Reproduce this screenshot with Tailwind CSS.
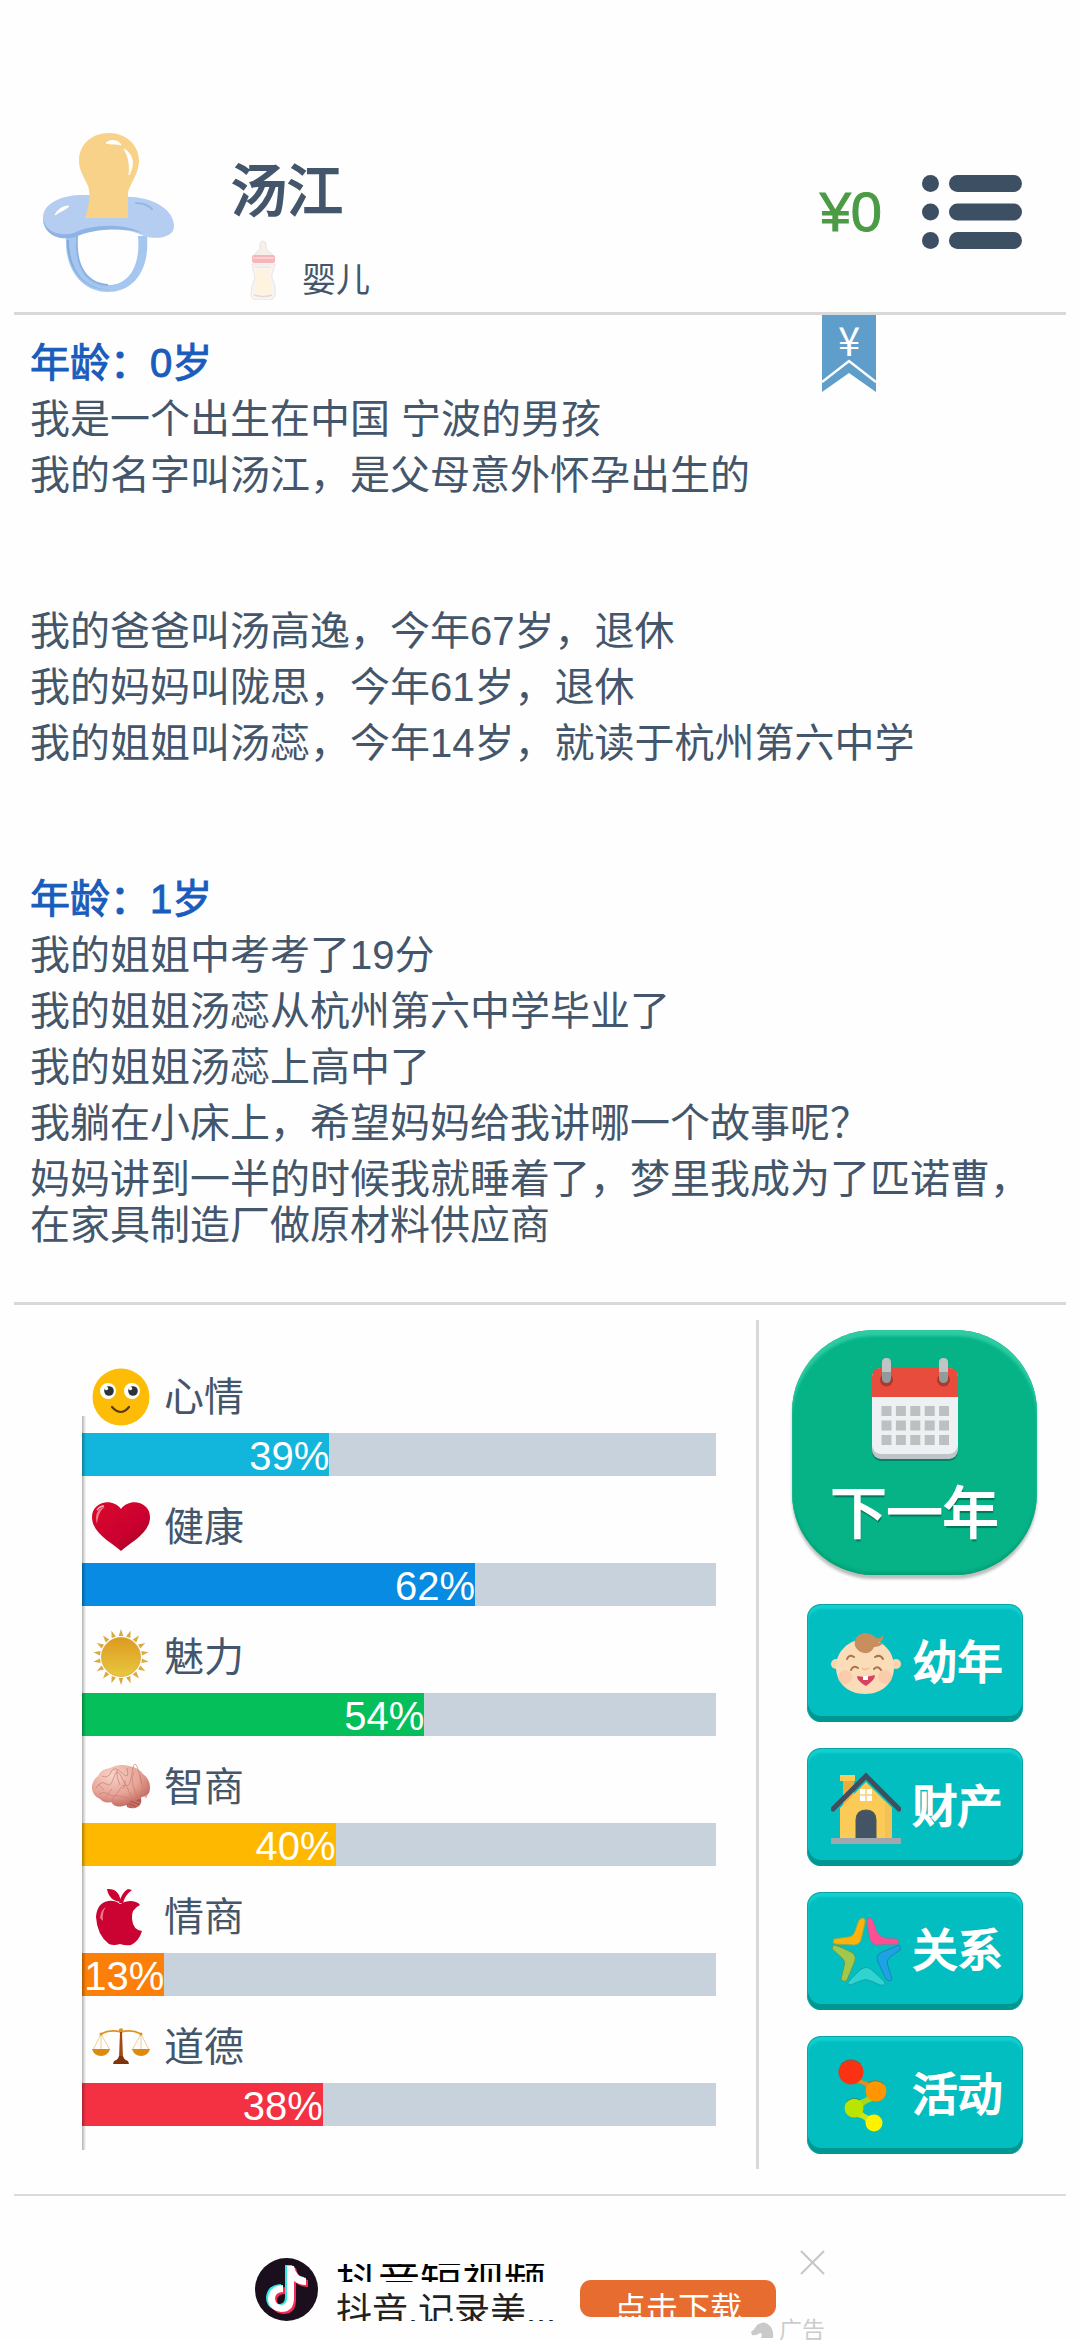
<!DOCTYPE html>
<html lang="zh-CN">
<head>
    <meta charset="UTF-8">
    <meta name="viewport" content="width=device-width, initial-scale=1.0">
    <title>人生模拟</title>
    <script src="https://cdn.jsdelivr.net/npm/@tailwindcss/browser@4"></script>
</head>
<body class="bg-[#fefefe] text-[#43566b] font-['Liberation_Sans','Noto_Sans_CJK_SC',sans-serif]">

<div class="flex flex-col min-h-screen px-3.5 overflow-hidden">

    <!-- Header -->
    <header class="flex items-start h-[312px] pt-[132px] pl-7 pr-11">
        <svg class="w-[136px] h-40 shrink-0" viewBox="0 0 136 160" aria-hidden="true">
            <path d="M24 104C22 140 42 160 66 160S108 140 105 104L96 104C99 138 84 153 67 153S32 136 34 104Z" fill="#a5c6ee"/>
            <path d="M27 108C27 138 42 158 68 157C44 160 24 138 25 108Z" fill="#82aadb"/>
            <path d="M35 104C33 134 44 152 66 153" fill="none" stroke="#8db3e3" stroke-width="2"/>
            <path d="M1 86C1 70 22 62 45 63L90 65C112 66 132 78 132 94C132 106 114 108 102 104C84 94 48 96 34 104C14 110 1 100 1 86Z" fill="#b4cdf0"/>
            <path d="M1 86C3 100 18 105 32 101C46 93 82 90 100 101C82 95 48 97 34 105C14 110 1 100 1 86Z" fill="#8fb3e4"/>
            <path d="M13 83C16 77 21 74 27 74C25 77 19 79 13 83Z" fill="#fff" stroke="#fff" stroke-width="1"/>
            <path d="M94 71Q104 71 110 77" fill="none" stroke="#93b6e8" stroke-width="2" stroke-linecap="round"/>
            <path d="M43 86C47 74 49 62 46 54C42 45 37 38 37 29C37 12 50 1 67 1S97 13 97 29C97 41 89 50 86 60L86 86Z" fill="#f7d288"/>
            <path d="M64 11C68 7 77 8 79 13C74 11 69 13 64 11Z" fill="#fff" stroke="#fff"/>
            <path d="M82 17C91 22 93 32 87 43C88 33 87 25 82 17Z" fill="#fff" stroke="#fff"/>
        </svg>

        <div class="flex flex-col pl-[53px] pt-7 grow">
            <h1 class="text-[56px] leading-[64px] [-webkit-text-stroke:2px]">汤江</h1>
            <div class="flex items-end gap-6 pl-[18px] pt-4">
                <svg class="w-[29px] h-[60px]" viewBox="0 0 29 60" aria-hidden="true">
                    <path d="M11 3Q14-1 17 3V9L20 12Q24 14 24 16H5Q5 14 8 12L11 9Z" fill="#f6f0ea" stroke="#e0dad4" stroke-width=".7"/>
                    <path d="M3 24H26Q25 30 23 34Q22 38 25 43Q27 49 26 55Q25 60 20 60H8Q3 60 2 55Q2 48 4 43Q7 38 5 33Q3 28 3 24Z" fill="#f8f4f1" stroke="#e2dbd5" stroke-width=".7"/>
                    <path d="M7 30H21V36Q22 41 23 46V53H6V46Q8 40 7 36Z" fill="#fdf3df"/>
                    <path d="M5 55Q14 58 23 55" fill="none" stroke="#ecd7cf" stroke-width="1.5"/>
                    <path d="M5 27H22" stroke="#eadeda"/>
                    <rect x="3" y="15" width="23" height="8" rx="2" fill="#f4b6bb"/>
                    <path d="M4 18H25" stroke="#f9cfd1" stroke-width="2"/>
                </svg>
                <span class="text-[34px] leading-10">婴儿</span>
            </div>
        </div>

        <div class="flex items-center gap-10 pt-[43px]">
            <span class="text-[56px] leading-[74px] text-[#4b9b46] [-webkit-text-stroke:1px]">¥0</span>
            <button type="button" aria-label="菜单">
                <svg class="w-[100px] h-[74px]" viewBox="0 0 100 74" fill="#3d4f63">
                    <circle cx="8.5" cy="8.5" r="8.5"/><rect x="27" width="73" height="17" rx="8.5"/>
                    <circle cx="8.5" cy="37" r="8.5"/><rect x="27" y="28.5" width="73" height="17" rx="8.5"/>
                    <circle cx="8.5" cy="65.5" r="8.5"/><rect x="27" y="57" width="73" height="17" rx="8.5"/>
                </svg>
            </button>
        </div>
    </header>

    <!-- Life log -->
    <main class="relative border-y-3 border-[#d9d9d9] h-[993px] pt-[25px] px-4 text-[40px] leading-[46px]">
        <button type="button" class="absolute top-0 right-[190px] w-[54px] h-[77px] pb-[30px] text-white" aria-label="金钱">
            <svg class="absolute inset-0 w-full h-full" viewBox="0 0 54 77" aria-hidden="true">
                <path d="M0 0H54V77L27 58L0 77Z" fill="#5f9ecb"/>
                <path d="M0 67L27 46L54 67" fill="none" stroke="#fff" stroke-width="2.5"/>
            </svg>
            <span class="relative block text-[40px] leading-[46px] font-['Noto_Sans_CJK_SC',sans-serif]">¥</span>
        </button>

        <section class="flex flex-col gap-2.5">
            <h2 class="text-[#1a5cbc] [-webkit-text-stroke:1px]">年龄：0岁</h2>
            <p>我是一个出生在中国 宁波的男孩</p>
            <p>我的名字叫汤江，是父母意外怀孕出生的</p>
        </section>
        <section class="flex flex-col gap-2.5 pt-[110px]">
            <p>我的爸爸叫汤高逸，今年67岁，退休</p>
            <p>我的妈妈叫陇思，今年61岁，退休</p>
            <p>我的姐姐叫汤蕊，今年14岁，就读于杭州第六中学</p>
        </section>
        <section class="flex flex-col gap-2.5 pt-[110px]">
            <h2 class="text-[#1a5cbc] [-webkit-text-stroke:1px]">年龄：1岁</h2>
            <p>我的姐姐中考考了19分</p>
            <p>我的姐姐汤蕊从杭州第六中学毕业了</p>
            <p>我的姐姐汤蕊上高中了</p>
            <p>我躺在小床上，希望妈妈给我讲哪一个故事呢？</p>
            <p>妈妈讲到一半的时候我就睡着了，梦里我成为了匹诺曹，在家具制造厂做原材料供应商</p>
        </section>
    </main>

    <div class="flex h-[889px] pt-[15px]">

        <!-- Stats -->
        <section class="grow h-[849px] border-r-3 border-[#d9d9d9] pl-[68px] pr-10 pt-[26px]">
            <div class="relative text-[40px]">
                <div>
                    <div class="flex items-center gap-3.5 h-[87px] pl-2.5 pt-3.5">
                        <svg class="w-[58px] h-[58px]" viewBox="0 0 58 58" aria-hidden="true">
                            <circle cx="29" cy="29" r="28.5" fill="#fdbc05"/>
                            <circle cx="16" cy="23" r="8" fill="#fff"/><circle cx="40" cy="23" r="8" fill="#fff"/>
                            <circle cx="17" cy="23" r="4.8" fill="#2c3338"/><circle cx="41" cy="23" r="4.8" fill="#2c3338"/>
                            <circle cx="14.5" cy="20.5" r="1.7" fill="#fff"/><circle cx="38.5" cy="20.5" r="1.7" fill="#fff"/>
                            <path d="M20 39Q29 49 37 39" fill="none" stroke="#5b3b08" stroke-width="2.2" stroke-linecap="round"/>
                        </svg>
                        <span class="leading-[46px]">心情</span>
                    </div>
                    <div class="h-[43px] bg-[#c8d2dc]"><div class="h-full bg-[#12b5dc] text-white text-right leading-[46px]" style="width:39%">39%</div></div>
                </div>
                <div>
                    <div class="flex items-center gap-3.5 h-[87px] pl-2.5 pt-3.5">
                        <svg class="w-[58px] h-[58px]" viewBox="0 0 58 58" aria-hidden="true">
                            <defs><linearGradient id="heart" x1="0" y1="0" x2="1" y2="1"><stop offset="0" stop-color="#d80a2c"/><stop offset=".6" stop-color="#cb0030"/><stop offset="1" stop-color="#93061c"/></linearGradient></defs>
                            <path d="M29 53C21 45 0 36 0 19C0 4 20-1 29 11C38-1 58 4 58 19C58 36 37 45 29 53Z" fill="url(#heart)"/>
                            <path d="M5 26C2 17 6 9 13 9C8 12 6 18 5 26Z" fill="#ff8fa0" opacity=".8"/>
                            <path d="M5 12Q8 8 12 8" stroke="#fff" stroke-width="1.5" fill="none" opacity=".7"/>
                        </svg>
                        <span class="leading-[46px]">健康</span>
                    </div>
                    <div class="h-[43px] bg-[#c8d2dc]"><div class="h-full bg-[#088be2] text-white text-right leading-[46px]" style="width:62%">62%</div></div>
                </div>
                <div>
                    <div class="flex items-center gap-3.5 h-[87px] pl-2.5 pt-3.5">
                        <svg class="w-[58px] h-[58px]" viewBox="0 0 58 58" aria-hidden="true">
                            <defs>
                                <linearGradient id="sun" x1="0" y1="0" x2="0" y2="1"><stop offset="0" stop-color="#dc9a20"/><stop offset="1" stop-color="#e9c73e"/></linearGradient>
                                <path id="ray" d="M26.7 8L29 1L31.3 8Z" fill="#d9aa3e"/>
                            </defs>
                            <use href="#ray"/><use href="#ray" transform="rotate(20 29 29)"/><use href="#ray" transform="rotate(40 29 29)"/><use href="#ray" transform="rotate(60 29 29)"/><use href="#ray" transform="rotate(80 29 29)"/><use href="#ray" transform="rotate(100 29 29)"/><use href="#ray" transform="rotate(120 29 29)"/><use href="#ray" transform="rotate(140 29 29)"/><use href="#ray" transform="rotate(160 29 29)"/><use href="#ray" transform="rotate(180 29 29)"/><use href="#ray" transform="rotate(200 29 29)"/><use href="#ray" transform="rotate(220 29 29)"/><use href="#ray" transform="rotate(240 29 29)"/><use href="#ray" transform="rotate(260 29 29)"/><use href="#ray" transform="rotate(280 29 29)"/><use href="#ray" transform="rotate(300 29 29)"/><use href="#ray" transform="rotate(320 29 29)"/><use href="#ray" transform="rotate(340 29 29)"/>
                            <circle cx="29" cy="29" r="19.5" fill="url(#sun)" stroke="#d9a63a" stroke-width=".8"/>
                        </svg>
                        <span class="leading-[46px]">魅力</span>
                    </div>
                    <div class="h-[43px] bg-[#c8d2dc]"><div class="h-full bg-[#05bf5b] text-white text-right leading-[46px]" style="width:54%">54%</div></div>
                </div>
                <div>
                    <div class="flex items-center gap-3.5 h-[87px] pl-2.5 pt-3.5">
                        <svg class="w-[58px] h-[58px]" viewBox="0 0 58 58" aria-hidden="true">
                            <defs><radialGradient id="brain" cx=".35" cy=".25" r=".8"><stop offset="0" stop-color="#f8d3c8"/><stop offset=".6" stop-color="#e6a396"/><stop offset="1" stop-color="#c0645a"/></radialGradient></defs>
                            <path d="M34 42L48 38Q51 44 47 48Q42 52 35 49Z" fill="#b55a50"/>
                            <path d="M37 44L46 48M36 47L43 50M39 42L48 45" stroke="#d98b80" stroke-width=".8"/>
                            <path d="M0 31Q-1 23 6 18Q9 11 18 10Q27 5 37 8Q46 9 51 16Q58 21 58 30Q58 38 50 39Q46 43 39 42Q38 47 31 48Q23 50 19 44Q13 46 8 41Q1 38 0 31Z" fill="url(#brain)"/>
                            <path d="M4 30Q9 22 14 26T22 19T31 22T40 15T49 23T55 31M10 18Q16 21 19 14T30 15T35 10M7 36Q13 33 18 37T28 31T38 36T50 32M20 43Q21 36 28 38T38 41M13 40L20 31M25 12Q24 20 28 27M42 14Q38 23 43 32M33 22Q34 28 31 31M6 26L12 32M48 17L50 26M45 39L42 31" fill="none" stroke="#c87d71" stroke-width=".7"/>
                        </svg>
                        <span class="leading-[46px]">智商</span>
                    </div>
                    <div class="h-[43px] bg-[#c8d2dc]"><div class="h-full bg-[#ffb800] text-white text-right leading-[46px]" style="width:40%">40%</div></div>
                </div>
                <div>
                    <div class="flex items-center gap-3.5 h-[87px] pl-2.5 pt-3.5">
                        <svg class="w-[58px] h-[58px]" viewBox="0 0 58 58" aria-hidden="true">
                            <g fill="#ca0332">
                                <path d="M15 1Q27 0 29 14Q17 13 15 1Z"/>
                                <path d="M27 15Q30 4 36 1L40 2Q33 7 31 15Z"/>
                                <path d="M28 16Q36 11 44 14Q47 15 48 17Q39 21 40 31Q41 42 50 43Q47 53 39 57Q34 58 28 56Q22 58 17 56Q5 47 4 29Q5 15 16 13Q23 12 28 16Z"/>
                            </g>
                            <path d="M8 30Q9 21 14 19Q10 24 11 33Z" fill="#f0738a"/>
                        </svg>
                        <span class="leading-[46px]">情商</span>
                    </div>
                    <div class="h-[43px] bg-[#c8d2dc]"><div class="h-full bg-[#fb7f08] text-white text-right leading-[46px]" style="width:13%">13%</div></div>
                </div>
                <div>
                    <div class="flex items-center gap-3.5 h-[87px] pl-2.5 pt-3.5">
                        <svg class="w-[58px] h-[58px]" viewBox="0 0 58 58" aria-hidden="true">
                            <path d="M9 16L1 32M9 16V32M9 16L18 32M49 16L40 32M49 16V32M49 16L57 32" stroke="#eec27c" stroke-width=".8"/>
                            <path d="M9 16Q18 11 29 14Q40 11 49 16" fill="none" stroke="#e0921f" stroke-width="1.8"/>
                            <circle cx="29" cy="12.5" r="2.2" fill="#e0921f"/><circle cx="9" cy="16" r="1.5" fill="#e0921f"/><circle cx="49" cy="16" r="1.5" fill="#e0921f"/>
                            <path d="M0 31H18Q16 38 9 38T0 31ZM40 31H58Q56 38 49 38T40 31Z" fill="#e08a0c"/>
                            <path d="M28 14H30L31 40H27Z" fill="#a04a12"/>
                            <path d="M27 38H31Q32 42 36 43L37 46H21L22 43Q26 42 27 38Z" fill="#7d330c"/>
                        </svg>
                        <span class="leading-[46px]">道德</span>
                    </div>
                    <div class="h-[43px] bg-[#c8d2dc]"><div class="h-full bg-[#f43142] text-white text-right leading-[46px]" style="width:38%">38%</div></div>
                </div>
                <!-- axis -->
                <div class="absolute left-0 top-[70px] -bottom-6 w-1 bg-linear-to-r from-black/30 to-transparent"></div>
            </div>
        </section>

        <!-- Actions -->
        <nav class="flex flex-col items-center gap-[26px] w-[307px] pl-1 pt-2.5 text-white">
            <button type="button" class="flex flex-col items-center w-[245px] h-[245px] mb-[3px] pt-7 rounded-[82px] bg-[#05b387] shadow-[0_4px_3px_#b9bdbb,inset_0_6px_3px_#2fcba3,inset_0_-3px_3px_#04a178]">
                <svg class="w-[88px] h-[104px]" viewBox="0 0 88 104" aria-hidden="true">
                    <rect x="1" y="20" width="86" height="83" rx="9" fill="#068263"/>
                    <rect x="1" y="18" width="86" height="83" rx="9" fill="#bfc5c9"/>
                    <rect x="1" y="10" width="86" height="86" rx="9" fill="#edf1f3"/>
                    <path d="M1 39V19Q1 10 10 10H78Q87 10 87 19V39Z" fill="#e84c3d"/>
                    <circle cx="15.5" cy="22" r="6.5" fill="#ad382e"/><circle cx="72.5" cy="22" r="6.5" fill="#ad382e"/>
                    <rect x="11" width="9" height="25" rx="4.5" fill="#919b9b"/><rect x="68" width="9" height="25" rx="4.5" fill="#919b9b"/>
                    <path d="M11 14V4.5Q11 0 15.5 0T20 4.5V14ZM68 14V4.5Q68 0 72.5 0T77 4.5V14Z" fill="#bfc4c4"/>
                    <path d="M10.5 53H78M10.5 67.5H78M10.5 82H78" stroke="#bdbfc0" stroke-width="10" stroke-dasharray="10 4.4"/>
                </svg>
                <span class="text-[56px] leading-[64px] mt-5 [-webkit-text-stroke:2px] [text-shadow:1px_3px_1px_#02755a]">下一年</span>
            </button>
            <button type="button" class="flex items-center gap-3 w-[216px] h-[118px] pl-[23px] rounded-[14px] border-x border-t border-[#08a5a6] bg-[#03bec0] shadow-[inset_0_-6px_0_#009792,inset_0_4px_2px_#12d0d0]">
                <svg class="w-[70px] h-[70px]" viewBox="0 0 70 70" aria-hidden="true">
                    <circle cx="5" cy="35" r="5" fill="#f9d5ae"/><circle cx="65" cy="35" r="5" fill="#f9d5ae"/>
                    <path d="M35 10C52 10 63 23 63 38C63 54 51 65 34 65S5 54 5 38C5 23 17 10 35 10Z" fill="#fbdcb9"/>
                    <circle cx="14" cy="48" r="7" fill="#f9c4a6" opacity=".7"/><circle cx="54" cy="48" r="7" fill="#f9c4a6" opacity=".7"/>
                    <path d="M24 17Q22 6 34 4Q42 5 45 9Q50 10 52 6Q53 12 47 14H53Q48 18 43 18Q40 25 33 24Q27 23 24 17Z" fill="#c68f5d"/>
                    <path d="M16 30Q18 25 23 28M44 28Q49 25 52 30M20 41Q22 36 27 39M43 40Q47 36 50 41" fill="none" stroke="#a87547" stroke-width="2" stroke-linecap="round"/>
                    <path d="M31 39Q34 42 38 39" fill="none" stroke="#eeb98e" stroke-width="1.5"/>
                    <path d="M26 47Q35 49 44 46Q44 51 35 57Q26 52 26 47Z" fill="#d9405f"/>
                    <path d="M32 47H37V51H32Z" fill="#fff"/>
                </svg>
                <span class="text-[45px] leading-[52px] [-webkit-text-stroke:2px] [text-shadow:0_-1px_1px_#046e70]">幼年</span>
            </button>
            <button type="button" class="flex items-center gap-3 w-[216px] h-[118px] pl-[23px] rounded-[14px] border-x border-t border-[#08a5a6] bg-[#03bec0] shadow-[inset_0_-6px_0_#009792,inset_0_4px_2px_#12d0d0]">
                <svg class="w-[70px] h-[72px]" viewBox="0 0 70 72" aria-hidden="true">
                    <path d="M12 6H23V24L12 34Z" fill="#e9ad3e"/><rect x="9" y="3" width="15" height="6" fill="#fccb57"/>
                    <path d="M9 36L35 10L61 36V66H9Z" fill="#fccb57"/>
                    <path d="M54 29L61 36V66H54Z" fill="#f3c156"/>
                    <path d="M2 37L35 4L68 37" fill="none" stroke="#3f4f5e" stroke-width="5" stroke-linecap="round"/>
                    <rect x="29" y="17" width="12" height="12" rx="1" fill="#fff"/><path d="M35 17V29M29 23H41" stroke="#f2cf7c" stroke-width="1.5"/>
                    <path d="M25 66V48Q25 38 35 38T45 48V66Z" fill="#435465" stroke="#50594f"/>
                    <rect x="0" y="66" width="71" height="6" fill="#9fa8ae"/>
                </svg>
                <span class="text-[45px] leading-[52px] [-webkit-text-stroke:2px] [text-shadow:0_-1px_1px_#046e70]">财产</span>
            </button>
            <button type="button" class="flex items-center gap-3 w-[216px] h-[118px] pl-[23px] rounded-[14px] border-x border-t border-[#08a5a6] bg-[#03bec0] shadow-[inset_0_-6px_0_#009792,inset_0_4px_2px_#12d0d0]">
                <svg class="w-[70px] h-[70px]" viewBox="0 0 70 70" aria-hidden="true">
                    <g stroke-width="1" stroke-linejoin="round">
                        <path d="M31 1Q35 1 34 6L30 23Q28 28 23 28L4 27Q1 26 3 22L17 20Q22 20 24 14L28 3Z" fill="#ffb20b" stroke="#8fae4c"/>
                        <path d="M37 1Q41 0 42 4L46 15Q49 20 54 21L66 22Q69 25 67 27L45 28Q41 27 39 23L36 6Z" fill="#ff4f92" stroke="#867a9c"/>
                        <path d="M2 28Q6 28 18 34Q26 37 24 44L16 63Q12 66 10 62L13 49Q15 44 10 40L1 32Z" fill="#a2c74b" stroke="#549f62"/>
                        <path d="M68 28Q71 30 69 33L59 40Q55 43 57 49L61 62Q59 66 55 62L47 45Q44 38 51 35Z" fill="#1ea2e5" stroke="#168aa9"/>
                        <path d="M29 53Q35 48 41 53L54 65Q54 69 49 68L40 64Q35 61 29 64L20 68Q15 68 18 64Z" fill="#2fd3d0" stroke="#12a5a5"/>
                    </g>
                </svg>
                <span class="text-[45px] leading-[52px] [-webkit-text-stroke:2px] [text-shadow:0_-1px_1px_#046e70]">关系</span>
            </button>
            <button type="button" class="flex items-center gap-3 w-[216px] h-[118px] pl-[23px] rounded-[14px] border-x border-t border-[#08a5a6] bg-[#03bec0] shadow-[inset_0_-6px_0_#009792,inset_0_4px_2px_#12d0d0]">
                <svg class="w-[70px] h-[74px]" viewBox="0 0 70 74" aria-hidden="true">
                    <path d="M26 17Q33 25 44 23L42 36Q36 25 24 23Z" fill="#e98a1c"/>
                    <path d="M38 34Q35 42 24 41L29 54Q30 44 46 41Z" fill="#a6d61e"/>
                    <path d="M29 50Q34 58 43 57L36 68Q36 59 26 58Z" fill="#cfe414"/>
                    <circle cx="20" cy="13" r="12.5" fill="#fa3212"/>
                    <circle cx="45" cy="32" r="10.5" fill="#ff9500"/>
                    <circle cx="23" cy="49" r="9.5" fill="#b9e500"/>
                    <circle cx="43" cy="64" r="8.5" fill="#fff200"/>
                    <path d="M10 5Q20-3 30 5M37 24Q45 19 53 25M15 43Q22 37 29 41" fill="none" stroke="#4c6d57" opacity=".7"/>
                </svg>
                <span class="text-[45px] leading-[52px] [-webkit-text-stroke:2px] [text-shadow:0_-1px_1px_#046e70]">活动</span>
            </button>
        </nav>
    </div>

    <!-- Ad banner -->
    <footer class="flex justify-center items-start h-[146px] border-t-2 border-[#d8dcda] pt-[54px] overflow-hidden">
        <svg class="w-[63px] h-[63px] mt-2 shrink-0" viewBox="0 0 63 63" aria-hidden="true">
            <defs><path id="note" d="M32 8H39Q41 19 51 20V27Q44 27 39 23V40Q39 54 26 54Q13 52 13 40Q14 28 28 27V34Q20 34 20 41Q21 47 27 47Q32 46 32 40Z"/></defs>
            <circle cx="31.5" cy="31.5" r="31.5" fill="#1b0f1d"/>
            <use href="#note" x="-2" y="-1" fill="#2ee9e4"/><use href="#note" x="2" y="2" fill="#f62a58"/><use href="#note" fill="#fff"/>
        </svg>
        <div class="w-[262px] pl-[18px] pt-3.5 text-black">
            <div class="h-[18px] overflow-hidden text-[42px] leading-[36px] whitespace-nowrap">抖音短视频</div>
            <div class="h-[30px] mt-[9px] overflow-hidden text-[36px] leading-[42px] text-[#222] whitespace-nowrap">抖音.记录美...</div>
        </div>
        <button type="button" class="w-[196px] h-[37px] mt-[30px] pt-2.5 rounded-[11px] bg-[#e66c2f] text-white text-[32px] leading-[38px] overflow-hidden">点击下载</button>
        <div class="flex flex-col items-end w-[49px]">
            <button type="button" aria-label="关闭">
                <svg class="w-[25px] h-[25px]" viewBox="0 0 25 25" fill="none" stroke="#c6c6c6" stroke-width="2"><path d="M1 1L24 24M24 1L1 24"/></svg>
            </button>
            <div class="flex items-center gap-1 pt-[43px] text-[23px] leading-6 text-[#ccc] whitespace-nowrap">
                <svg class="w-6 h-4 shrink-0" viewBox="0 0 24 16" fill="#c9c9c9" aria-hidden="true"><path d="M0 10Q4 7 6 3Q13-2 18 3Q23 7 22 16H10Q12 11 9 11Q5 14 1 13Z"/></svg>
                <span>广告</span>
            </div>
        </div>
    </footer>
</div>

</body>
</html>
